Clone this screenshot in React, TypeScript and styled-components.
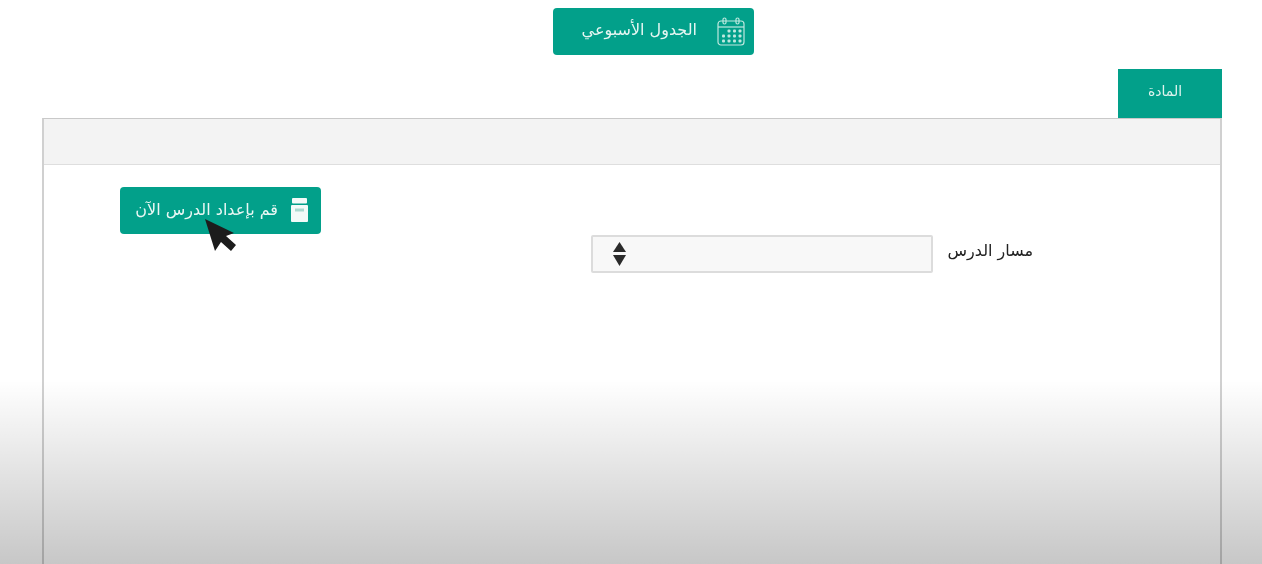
import styled, { createGlobalStyle } from 'styled-components';

const GlobalStyle = createGlobalStyle`
  html, body {
    margin: 0;
    padding: 0;
    height: 100%;
    background: #fff;
    overflow: hidden;
  }

  body {
    font-family: "DejaVu Sans", "Liberation Sans", sans-serif;
  }
`;

const GREEN = '#02a08a';

const Page = styled.div`
  position: relative;
  width: 1262px;
  height: 564px;
  padding-top: 8px;
  box-sizing: border-box;
  overflow: hidden;
  background: #fff;
  filter: blur(0.35px);
`;

const TopBar = styled.div`
  display: flex;
  justify-content: center;
  padding-left: 45px;
`;

const ScheduleButton = styled.button`
  display: flex;
  align-items: center;
  gap: 20px;
  width: 201px;
  height: 47px;
  padding: 0 9px 0 0;
  border: 0;
  border-radius: 4px;
  background: ${GREEN};
  color: #e6f6f2;
  font-family: inherit;
  font-size: 16px;
  white-space: nowrap;

  span {
    padding-bottom: 5px;
  }
`;

const TabRow = styled.div`
  display: flex;
  justify-content: flex-end;
  margin-top: 14px;
  padding-right: 40px;
`;

const Tab = styled.div`
  display: flex;
  align-items: center;
  justify-content: center;
  width: 104px;
  height: 49px;
  padding: 0 10px 5px 0;
  box-sizing: border-box;
  background: ${GREEN};
  color: #dff3ee;
  font-size: 14px;
`;

const Panel = styled.section`
  height: 460px;
  margin: 0 40px 0 42px;
  border: 2px solid #d0d0d0;
  border-top: 1px solid #c9c9c9;
  border-bottom: 0;
  box-sizing: border-box;
`;

const PanelHeader = styled.div`
  height: 46px;
  background: #f3f3f3;
  border-bottom: 1px solid #dedede;
  box-sizing: border-box;
`;

const PanelBody = styled.div`
  display: flex;
  align-items: flex-start;
  justify-content: space-between;
  padding: 22px 187px 0 76px;
`;

const Field = styled.div`
  display: flex;
  align-items: center;
  gap: 14px;
  margin-top: 48px;
`;

const Label = styled.label`
  padding-bottom: 7px;
  font-size: 16px;
  color: #222;
  white-space: nowrap;
`;

const SelectBox = styled.div`
  display: flex;
  align-items: center;
  width: 342px;
  height: 38px;
  padding: 0 0 1px 20px;
  box-sizing: border-box;
  background: #f8f8f8;
  border: 2px solid #dcdcdc;
  border-radius: 2px;
`;

const PrepareButton = styled.button`
  position: relative;
  display: flex;
  align-items: center;
  justify-content: flex-end;
  gap: 13px;
  width: 201px;
  height: 47px;
  padding: 0 13px 2px 0;
  border: 0;
  border-radius: 4px;
  background: ${GREEN};
  color: #e9f7f4;
  font-family: inherit;
  font-size: 16px;
  white-space: nowrap;
`;

const Pointer = styled.svg`
  position: absolute;
  left: 84px;
  top: 31px;
`;

const BottomShade = styled.div`
  position: absolute;
  left: 0;
  right: 0;
  bottom: 0;
  height: 184px;
  background: linear-gradient(to bottom, rgba(0, 0, 0, 0), rgba(0, 0, 0, 0.22));
  pointer-events: none;
`;

const CalendarIcon = () => (
  <svg width="28" height="29" viewBox="0 0 28 29" fill="none" stroke="#bfe8df" strokeWidth="1.2">
    <rect x="1" y="4" width="26" height="24" rx="3" />
    <path d="M1 10h26" />
    <rect x="6" y="1" width="3" height="6" rx="1.5" />
    <rect x="19" y="1" width="3" height="6" rx="1.5" />
    <g fill="#bfe8df" stroke="none">
      {[12.5, 17.5, 22.5].map((y, row) =>
        [5, 10.5, 16, 21.5]
          .filter((_, col) => row > 0 || col > 0)
          .map((x) => <rect key={`${x}-${y}`} x={x} y={y} width="3" height="3" rx="1" />),
      )}
    </g>
  </svg>
);

const BookIcon = () => (
  <svg width="17" height="24" viewBox="0 0 17 24">
    <rect x="1" y="0" width="15" height="5.5" rx="1" fill="#f2faf8" />
    <rect x="0" y="7" width="17" height="17" rx="1" fill="#f2faf8" />
    <rect x="4" y="10.5" width="9" height="3" fill="#a9d9cf" />
  </svg>
);

const SortIcon = () => (
  <svg width="13" height="24" viewBox="0 0 13 24" fill="#2b2b2b">
    <path d="M6.5 0L13 10H0z" />
    <path d="M0 13h13L6.5 24z" />
  </svg>
);

export default function App() {
  return (
    <Page>
      <GlobalStyle />
      <TopBar>
        <ScheduleButton dir="rtl">
          <CalendarIcon />
          <span>الجدول الأسبوعي</span>
        </ScheduleButton>
      </TopBar>

      <TabRow>
        <Tab dir="rtl">المادة</Tab>
      </TabRow>

      <Panel>
        <PanelHeader />
        <PanelBody>
          <PrepareButton>
            <span dir="rtl">قم بإعداد الدرس الآن</span>
            <BookIcon />
            <Pointer width="34" height="34" viewBox="0 0 34 34">
              <path d="M1 1l29 14-8 3 10 9-5 6-10-9-6 9z" fill="#1c1c1c" />
            </Pointer>
          </PrepareButton>

          <Field>
            <SelectBox>
              <SortIcon />
            </SelectBox>
            <Label dir="rtl">مسار الدرس</Label>
          </Field>
        </PanelBody>
      </Panel>

      <BottomShade />
    </Page>
  );
}
